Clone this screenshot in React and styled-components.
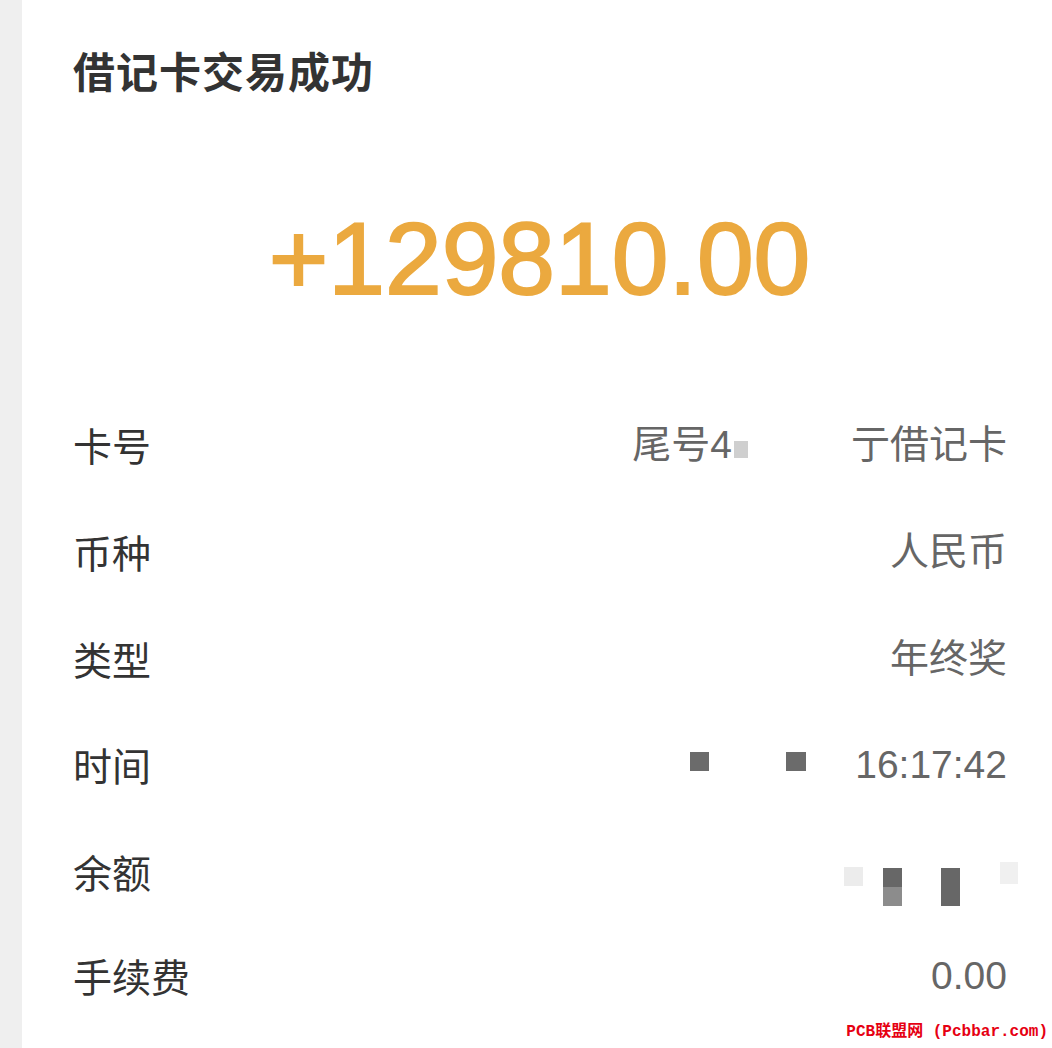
import React from "react";
import styled, { createGlobalStyle } from "styled-components";

const Global = createGlobalStyle`
  html, body {
    margin: 0;
    padding: 0;
    height: 100%;
    background: #ffffff;
    overflow: hidden;
  }
  #root { height: 100%; }
  * { box-sizing: border-box; }
`;

const Page = styled.div`
  position: relative;
  display: flex;
  width: 1052px;
  height: 1048px;
  background: #ffffff;
  font-family: "Liberation Sans", "Noto Sans CJK SC", sans-serif;
`;

const Strip = styled.div`
  flex: 0 0 22px;
  background: #efefef;
`;

const Content = styled.div`
  flex: 1;
  display: flex;
  flex-direction: column;
  padding: 48px 45px 0 51px;
`;

const Title = styled.h1`
  margin: 0;
  height: 43px;
  font-family: "Noto Sans CJK SC", sans-serif;
  font-size: 42px;
  line-height: 43px;
  font-weight: 600;
  color: #333333;
  letter-spacing: 1px;
`;

const Amount = styled.div`
  margin-top: 116px;
  height: 104px;
  text-align: center;
  font-family: "Liberation Sans", Arial, sans-serif;
  font-size: 102px;
  line-height: 104px;
  color: #eba93f;
  -webkit-text-stroke: 2px #eba93f;
  padding-right: 1px;
`;

const List = styled.div`
  margin-top: 80px;
  display: flex;
  flex-direction: column;
`;

const Row = styled.div`
  display: flex;
  align-items: center;
  justify-content: space-between;
  height: ${(p) => p.$h || 107}px;
`;

const Label = styled.span`
  font-family: "Noto Sans CJK SC", sans-serif;
  font-size: 39px;
  line-height: 1;
  color: #333333;
`;

const Value = styled.div`
  display: flex;
  align-items: center;
  font-family: "Liberation Sans", "Noto Sans CJK SC", sans-serif;
  font-size: 39px;
  line-height: 1;
  color: #666666;
`;

const Tile = styled.span`
  display: inline-block;
  flex: none;
  width: ${(p) => p.$w}px;
  height: ${(p) => p.$h}px;
  margin-left: ${(p) => p.$ml || 0}px;
  margin-right: ${(p) => p.$mr || 0}px;
  background: ${(p) => p.$bg};
  transform: translateY(${(p) => p.$dy || 0}px);
`;

const SplitTile = styled.span`
  display: inline-flex;
  flex: none;
  flex-direction: column;
  width: 19px;
  height: 38px;
  margin-left: ${(p) => p.$ml || 0}px;
  transform: translateY(${(p) => p.$dy || 0}px);
  &::before, &::after {
    content: "";
    flex: 1;
  }
  &::before { background: #676767; }
  &::after { background: ${(p) => (p.$solid ? "#676767" : "#8c8c8c")}; }
`;

const Gap = styled.span`
  display: inline-block;
  flex: none;
  width: ${(p) => p.$w}px;
`;

const Watermark = styled.div`
  position: absolute;
  right: 4px;
  bottom: 6px;
  font-family: "Liberation Mono", "Noto Sans CJK SC", monospace;
  font-weight: 700;
  font-size: 16px;
  line-height: 20px;
  color: #e60012;
  background: #ffffff;
  white-space: pre;
`;

export default function App() {
  return (
    <>
      <Global />
      <Page>
        <Strip />
        <Content>
          <Title>借记卡交易成功</Title>
          <Amount>+129810.00</Amount>
          <List>
            <Row>
              <Label>卡号</Label>
              <Value>
                尾号4
                <Tile $w={14} $h={17} $bg="#cfcfcf" $ml={2} $dy={5} />
                <Gap $w={103} />
                亍借记卡
              </Value>
            </Row>
            <Row>
              <Label>币种</Label>
              <Value>人民币</Value>
            </Row>
            <Row $h={106}>
              <Label>类型</Label>
              <Value>年终奖</Value>
            </Row>
            <Row>
              <Label>时间</Label>
              <Value>
                <Tile $w={19} $h={19} $bg="#6b6b6b" $dy={-3} />
                <Tile $w={20} $h={19} $bg="#6b6b6b" $ml={77} $dy={-3} />
                <Gap $w={49} />
                16:17:42
              </Value>
            </Row>
            <Row>
              <Label>余额</Label>
              <Value>
                <Tile $w={19} $h={19} $bg="#ececec" $dy={5} />
                <SplitTile $ml={20} $dy={15} />
                <SplitTile $ml={39} $dy={15} $solid />
                <Tile $w={18} $h={22} $bg="#f0f0f0" $ml={40} $mr={-11} $dy={1} />
              </Value>
            </Row>
            <Row $h={100}>
              <Label>手续费</Label>
              <Value>0.00</Value>
            </Row>
          </List>
        </Content>
        <Watermark>{"PCB联盟网 (Pcbbar.com)"}</Watermark>
      </Page>
    </>
  );
}
